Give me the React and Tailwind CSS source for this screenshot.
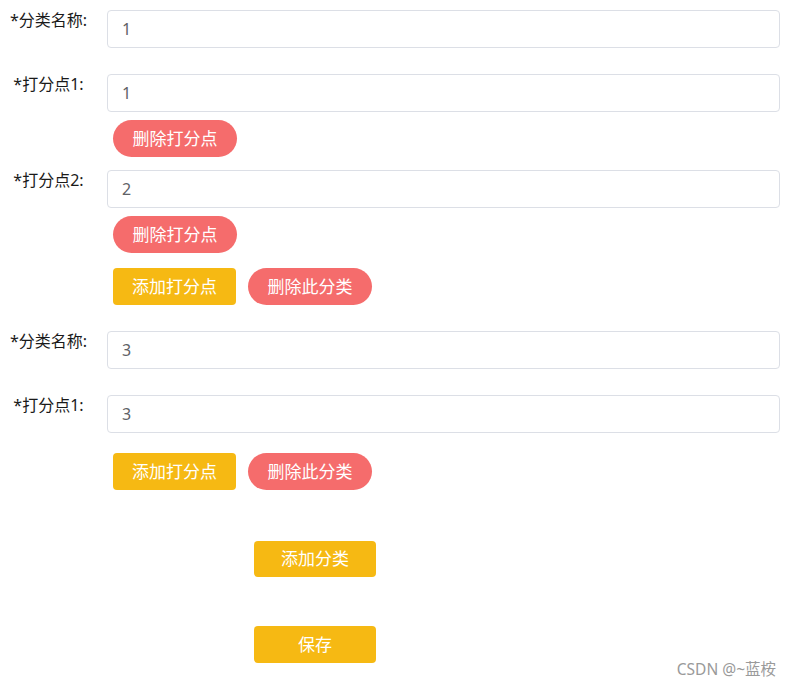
import React from "react";

function Row({ label, value, className = "" }) {
  return (
    <div className={"flex items-start " + className}>
      <div className="w-[97px] shrink-0 text-center text-[16px] leading-[20px] text-[#1a1a1a]">{label}</div>
      <input
        readOnly
        value={value}
        className="ml-[10px] h-[38px] flex-1 rounded-[4px] border border-[#dcdfe6] bg-white px-[14px] text-[16px] text-[#606266] outline-none"
      />
    </div>
  );
}

function RedBtn({ children, className = "" }) {
  return (
    <button className={"h-[37px] w-[124px] rounded-full bg-[#f56c6c] text-[17px] text-white " + className}>
      {children}
    </button>
  );
}

function YellowBtn({ children, className = "" }) {
  return (
    <button className={"h-[37px] w-[123px] rounded-[4px] bg-[#f6b913] text-[17px] text-white " + className}>
      {children}
    </button>
  );
}

export default function App() {
  return (
    <div className="relative h-[686px] w-[791px] overflow-hidden bg-white font-['Noto_Sans','Noto_Sans_CJK_SC',sans-serif]">
      <div className="flex flex-col pr-[11px] pt-[10px]">
        <Row label="*分类名称:" value="1" />
        <Row label="*打分点1:" value="1" className="mt-[26px]" />
        <div className="mt-[8px] pl-[113px]">
          <RedBtn>删除打分点</RedBtn>
        </div>
        <Row label="*打分点2:" value="2" className="mt-[13px]" />
        <div className="mt-[8px] pl-[113px]">
          <RedBtn>删除打分点</RedBtn>
        </div>
        <div className="mt-[15px] flex gap-[12px] pl-[113px]">
          <YellowBtn>添加打分点</YellowBtn>
          <RedBtn>删除此分类</RedBtn>
        </div>
        <Row label="*分类名称:" value="3" className="mt-[26px]" />
        <Row label="*打分点1:" value="3" className="mt-[26px]" />
        <div className="mt-[20px] flex gap-[12px] pl-[113px]">
          <YellowBtn>添加打分点</YellowBtn>
          <RedBtn>删除此分类</RedBtn>
        </div>
        <div className="mt-[51px] pl-[254px]">
          <YellowBtn className="!h-[36px] !w-[122px]">添加分类</YellowBtn>
        </div>
        <div className="mt-[49px] pl-[254px]">
          <YellowBtn className="!w-[122px]">保存</YellowBtn>
        </div>
      </div>
      <div className="absolute bottom-[8px] right-[15px] text-[15.5px] leading-[18px] text-[#9a9a9a]">
        CSDN @~蓝桉
      </div>
    </div>
  );
}
